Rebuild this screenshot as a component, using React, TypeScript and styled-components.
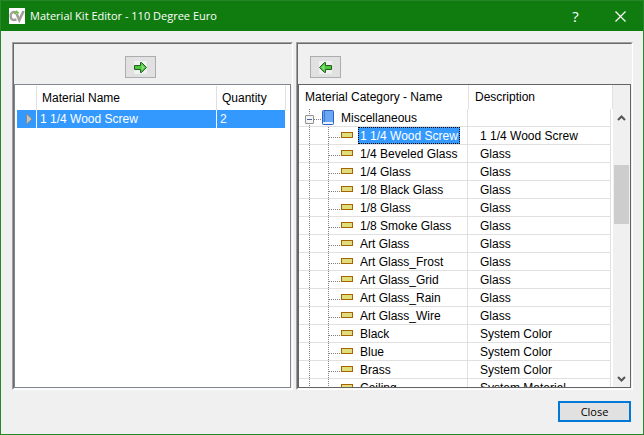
import React, { useState } from "react";
import styled, { createGlobalStyle } from "styled-components";

const GlobalStyle = createGlobalStyle`
  *, *::before, *::after { box-sizing: border-box; }
  body { margin: 0; background: #f0f0f0; }
  button { font: inherit; color: inherit; margin: 0; padding: 0; }
  svg { display: block; flex: none; }
`;

const dotsDown = "repeating-linear-gradient(to bottom, #808080 0 1px, transparent 1px 2px)";
const dotsAcross = "repeating-linear-gradient(to right, #808080 0 1px, transparent 1px 2px)";

const Window = styled.div`
  display: flex;
  flex-direction: column;
  height: 100vh;
  border: 1px solid #268726;
  background: #f0f0f0;
  color: #000;
  font: 12px/16px "Liberation Sans", Arial, sans-serif;
`;

const TitleBar = styled.header`
  display: flex;
  align-items: center;
  flex: none;
  height: 30px;
  padding-left: 8px;
  background: #107c10;
  color: #fff;
`;

const Title = styled.h1`
  flex: 1;
  margin: 0 0 0 5px;
  font: 400 11px/16px "Open Sans", "Noto Sans", sans-serif;
`;

const CaptionButton = styled.button`
  display: flex;
  align-items: center;
  justify-content: center;
  width: 45px;
  height: 30px;
  border: 0;
  background: transparent;
  font: 400 15px/20px "Open Sans", "Noto Sans", sans-serif;
`;

const Panels = styled.main`
  display: grid;
  grid-template-columns: 281fr 337fr;
  gap: 3px;
  flex: 1;
  min-height: 0;
  padding: 11px 10px 0 11px;
`;

const Panel = styled.section`
  display: flex;
  flex-direction: column;
  min-width: 0;
  min-height: 0;
  border: 1px solid;
  border-color: #a0a0a0 #fff #fff #a0a0a0;
`;

const PanelInner = styled.div`
  display: flex;
  flex-direction: column;
  flex: 1;
  min-height: 0;
  border: 1px solid;
  border-color: #696969 #f0f0f0 #f8f8f8 #696969;
`;

const Toolbar = styled.div<{ $indent: string }>`
  flex: none;
  height: 40px;
  padding: 12px 0 0 ${(p) => p.$indent};
`;

const ToolButton = styled.button`
  display: flex;
  align-items: center;
  justify-content: center;
  width: 31px;
  height: 22px;
  border: 1px solid #adadad;
  background: #e1e1e1;
`;

const GridFrame = styled.div<{ $edge: string }>`
  display: flex;
  flex: 1;
  min-height: 0;
  border: 1px solid ${(p) => p.$edge};
  background: #fff;
`;

const Col = styled.col<{ $width?: number }>`
  width: ${(p) => (p.$width ? `${p.$width}px` : "auto")};
`;

const KitTable = styled.table`
  width: 100%;
  height: max-content;
  margin: 1px 4px 0 2px;
  table-layout: fixed;
  border-collapse: separate;
  border-spacing: 0;
`;

const KitHeading = styled.th`
  height: 24px;
  padding: 0 0 0 5px;
  border-right: 1px solid #e0e0e0;
  font-weight: 400;
  text-align: left;
`;

const KitCell = styled.td`
  height: 18px;
  padding: 0 0 0 3px;
  border-right: 1px solid #fff;
  background: #3399ff;
  color: #fff;
`;

const Marker = styled.svg`
  margin-left: 5px;
`;

const Catalogue = styled.div`
  display: flex;
  flex-direction: column;
  flex: 1;
  min-width: 0;
`;

const TreeTable = styled.table`
  width: 100%;
  table-layout: fixed;
  border-collapse: separate;
  border-spacing: 0;
`;

const TreeScroller = styled.div`
  flex: 1;
  min-height: 0;
  padding-right: 2px;
  overflow-y: auto;
  scrollbar-width: none;
`;

const TreeHeading = styled.th`
  height: 24px;
  padding: 0 0 0 6px;
  border-right: 1px solid #e0e0e0;
  font-weight: 400;
  text-align: left;
  white-space: nowrap;
`;

const TreeCell = styled.td<{ $text?: boolean }>`
  height: 18px;
  padding: 0 0 0 ${(p) => (p.$text ? "12px" : "0")};
  border-right: 1px solid #e0e0e0;
  border-bottom: 1px solid #e0e0e0;
  white-space: nowrap;
`;

const Branch = styled.div`
  display: flex;
  align-items: center;
  height: 17px;
`;

const Rail = styled.span<{ $width: number; $at: number }>`
  display: flex;
  align-items: center;
  flex: none;
  align-self: stretch;
  width: ${(p) => p.$width}px;
  background: ${dotsDown} ${(p) => p.$at}px 0 / 1px 100% no-repeat;
`;

const Elbow = styled.span<{ $width: number }>`
  flex: none;
  align-self: stretch;
  width: ${(p) => p.$width}px;
  background: ${dotsAcross} 0 10px / calc(100% - 1px) 1px no-repeat;
`;

const Expander = styled.button`
  width: 9px;
  height: 9px;
  margin: 4px 0 0 6px;
  border: 1px solid #919191;
  border-radius: 1px;
  background: linear-gradient(#4b63a7, #4b63a7) center / 5px 1px no-repeat, #f5f5f5;
`;

const Label = styled.span<{ $selected?: boolean }>`
  height: 17px;
  margin-left: 5px;
  padding: 0 1px;
  border: 1px ${(p) => (p.$selected ? "dotted #000" : "solid transparent")};
  background: ${(p) => (p.$selected ? "#3399ff" : "transparent")};
  color: ${(p) => (p.$selected ? "#fff" : "#000")};
  line-height: 17px;
`;

const ScrollBar = styled.div`
  display: flex;
  flex-direction: column;
  flex: none;
  width: 17px;
  padding: 24px 1px 0 1px;
  background: #f0f0f0;
`;

const ScrollButton = styled.button`
  display: flex;
  align-items: center;
  justify-content: center;
  flex: none;
  width: 15px;
  height: 17px;
  border: 0;
  background: transparent;
`;

const Track = styled.div`
  display: grid;
  grid-template-rows: 39fr 59fr 146fr;
  flex: 1;
`;

const Thumb = styled.div`
  grid-row: 2;
  background: #cdcdcd;
`;

const Footer = styled.footer`
  display: flex;
  justify-content: flex-end;
  flex: none;
  padding: 11px 12px 12px;
`;

const CloseButton = styled.button`
  width: 73px;
  height: 21px;
  border: 2px solid #0078d7;
  background: #e1e1e1;
  font: 400 11px/16px "Open Sans", "Noto Sans", sans-serif;
`;

const Logo = () => (
  <svg width="16" height="16" viewBox="0 0 16 16" aria-hidden="true">
    <rect width="16" height="16" fill="#fff" />
    <path d="M7.500 4.600C4 3 1.600 5 1.600 8S4 13 7.500 11.400" fill="none" stroke="#a3a09b" strokeWidth="2.400" />
    <path d="M7.500 5.500L10.300 12L14.600 3" fill="none" stroke="#a3a09b" strokeWidth="2.600" />
    <path d="M5.500 6L7.500 3.500L9.500 5.500" fill="none" stroke="#6fbf44" strokeWidth="1.800" />
  </svg>
);

const Arrow = ({ left }: { left?: boolean }) => (
  <svg width="13" height="13" viewBox="0 0 13 13" aria-hidden="true">
    <rect width="13" height="13" fill="#f0f0f0" />
    <g transform={left ? "translate(13 0) scale(-1 1)" : undefined}>
      <path d="M.5 4.500H6.500V1.500H7.500L12.500 6.500L7.500 11.500H6.500V8.500H.5Z" fill="#4cc63d" stroke="#22601f" />
      <path d="M7.500 3.500L10.500 6.500L7.500 9.500Z" fill="#8edc84" />
    </g>
  </svg>
);

const Book = () => (
  <svg width="12" height="15" viewBox="0 0 12 15" aria-hidden="true">
    <rect x=".5" y=".5" width="11" height="14" rx="1" fill="#6aa6f2" stroke="#2a62bd" />
    <path d="M2.500 1V12" stroke="#3f78cf" />
    <path d="M1 13H11" stroke="#e8f1fc" strokeWidth="2" />
  </svg>
);

const BarIcon = styled.svg`
  margin-bottom: 1px;
`;

const Bar = () => (
  <BarIcon width="12" height="6" viewBox="0 0 12 6" aria-hidden="true">
    <rect x=".5" y=".5" width="11" height="5" fill="#e0dd7c" stroke="#a66300" />
  </BarIcon>
);

const Chevron = ({ down }: { down?: boolean }) => (
  <svg width="9" height="6" viewBox="0 0 9 6" aria-hidden="true">
    <path d={down ? "M1 1L4.500 4.500L8 1" : "M1 5L4.500 1.500L8 5"} fill="none" stroke="#555" strokeWidth="2" />
  </svg>
);

const materials: [string, string][] = [
  ["1 1/4 Wood Screw", "1 1/4 Wood Screw"],
  ["1/4 Beveled Glass", "Glass"],
  ["1/4 Glass", "Glass"],
  ["1/8 Black Glass", "Glass"],
  ["1/8 Glass", "Glass"],
  ["1/8 Smoke Glass", "Glass"],
  ["Art Glass", "Glass"],
  ["Art Glass_Frost", "Glass"],
  ["Art Glass_Grid", "Glass"],
  ["Art Glass_Rain", "Glass"],
  ["Art Glass_Wire", "Glass"],
  ["Black", "System Color"],
  ["Blue", "System Color"],
  ["Brass", "System Color"],
  ["Ceiling", "System Material"],
];

export default function App() {
  const [open, setOpen] = useState(true);
  const [selected, setSelected] = useState(0);

  return (
    <>
      <GlobalStyle />
      <Window>
        <TitleBar>
          <Logo />
          <Title>Material Kit Editor - 110 Degree Euro</Title>
          <CaptionButton aria-label="Help">?</CaptionButton>
          <CaptionButton aria-label="Close window">
            <svg width="11" height="11" viewBox="0 0 11 11" aria-hidden="true">
              <path d="M.5 .5L10.500 10.500M10.500 .5L.5 10.500" stroke="#fff" strokeWidth="1.200" />
            </svg>
          </CaptionButton>
        </TitleBar>
        <Panels>
          <Panel>
            <PanelInner>
              <Toolbar $indent="40%">
                <ToolButton aria-label="Move right"><Arrow /></ToolButton>
              </Toolbar>
              <GridFrame $edge="#828790">
                <KitTable>
                  <colgroup>
                    <Col $width={20} />
                    <Col />
                    <Col $width={69} />
                  </colgroup>
                  <thead>
                    <tr>
                      <KitHeading aria-label="Current row" />
                      <KitHeading>Material Name</KitHeading>
                      <KitHeading>Quantity</KitHeading>
                    </tr>
                  </thead>
                  <tbody>
                    <tr>
                      <KitCell>
                        <Marker width="8" height="12" viewBox="0 0 8 12" aria-hidden="true">
                          <path d="M1.500 .8L7 6L1.500 11.200Z" fill="#c4c4c4" stroke="#8a8a8a" />
                        </Marker>
                      </KitCell>
                      <KitCell>1 1/4 Wood Screw</KitCell>
                      <KitCell>2</KitCell>
                    </tr>
                  </tbody>
                </KitTable>
              </GridFrame>
            </PanelInner>
          </Panel>
          <Panel>
            <PanelInner>
              <Toolbar $indent="12px">
                <ToolButton aria-label="Move left"><Arrow left /></ToolButton>
              </Toolbar>
              <GridFrame $edge="#646464">
                <Catalogue>
                  <TreeTable>
                    <colgroup><Col $width={170} /><Col /></colgroup>
                    <thead>
                      <tr>
                        <TreeHeading>Material Category - Name</TreeHeading>
                        <TreeHeading>Description</TreeHeading>
                      </tr>
                    </thead>
                  </TreeTable>
                  <TreeScroller>
                    <TreeTable aria-label="Materials">
                      <colgroup><Col $width={169} /><Col /></colgroup>
                      <tbody>
                        <tr>
                          <TreeCell>
                            <Branch>
                              <Rail $width={15} $at={10}>
                                <Expander aria-label="Toggle Miscellaneous" aria-expanded={open} onClick={() => setOpen(!open)} />
                              </Rail>
                              <Elbow $width={8} />
                              <Book />
                              <Label>Miscellaneous</Label>
                            </Branch>
                          </TreeCell>
                          <TreeCell />
                        </tr>
                        {open && materials.map(([name, description], i) => (
                          <tr key={name} onClick={() => setSelected(i)}>
                            <TreeCell>
                              <Branch>
                                <Rail $width={11} $at={10} />
                                <Rail $width={19} $at={18} />
                                <Elbow $width={12} />
                                <Bar />
                                <Label $selected={i === selected}>{name}</Label>
                              </Branch>
                            </TreeCell>
                            <TreeCell $text>{description}</TreeCell>
                          </tr>
                        ))}
                      </tbody>
                    </TreeTable>
                  </TreeScroller>
                </Catalogue>
                <ScrollBar>
                  <ScrollButton aria-label="Scroll up"><Chevron /></ScrollButton>
                  <Track><Thumb /></Track>
                  <ScrollButton aria-label="Scroll down"><Chevron down /></ScrollButton>
                </ScrollBar>
              </GridFrame>
            </PanelInner>
          </Panel>
        </Panels>
        <Footer>
          <CloseButton>Close</CloseButton>
        </Footer>
      </Window>
    </>
  );
}
